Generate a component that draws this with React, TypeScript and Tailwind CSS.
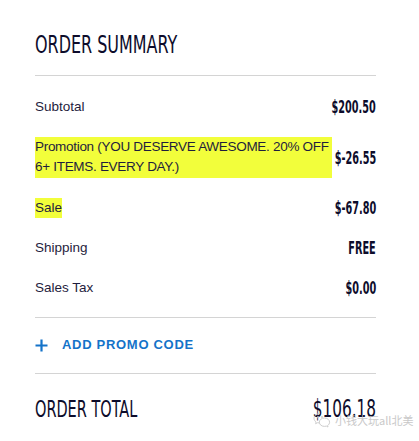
import React from 'react';

const condensed = "font-['DejaVu_Sans_Condensed','Liberation_Sans',sans-serif]";

interface Line {
  label: React.ReactNode;
  amount: string;
  highlight?: boolean;
  tight?: boolean;
}

const lines: Line[] = [
  { label: 'Subtotal', amount: '$200.50' },
  {
    label: (
      <>
        Promotion (YOU DESERVE AWESOME. 20% OFF
        <br />
        6+ ITEMS. EVERY DAY.)
      </>
    ),
    amount: '$-26.55',
    highlight: true,
    tight: true,
  },
  { label: 'Sale', amount: '$-67.80', highlight: true },
  { label: 'Shipping', amount: 'FREE' },
  { label: 'Sales Tax', amount: '$0.00' },
];

const WeChatMark: React.FC = () => (
  <svg width="18" height="16" viewBox="0 0 18 16" fill="none" stroke="#c9c9c9" strokeWidth="1">
    <path d="M7 1.5c-3.3 0-6 2.1-6 4.8 0 1.5.8 2.8 2.1 3.7l-.5 1.7 2-1c.7.2 1.5.3 2.3.3" />
    <path d="M11.5 6c-2.9 0-5.2 1.9-5.2 4.2s2.3 4.2 5.2 4.2c.6 0 1.2-.1 1.8-.3l1.7.9-.4-1.5c1.2-.8 2-1.9 2-3.3C16.6 7.9 14.3 6 11.5 6z" />
    <circle cx="5" cy="5" r=".6" fill="#c9c9c9" />
    <circle cx="9" cy="5" r=".6" fill="#c9c9c9" />
  </svg>
);

const App: React.FC = () => {
  return (
    <div className="relative w-[419px] h-[441px] overflow-hidden bg-white text-[#1f1d3d] font-['Liberation_Sans',sans-serif]">
      <div className="pl-[35px] pr-[43px] pt-[31px]">
        <div className="pb-[15px] border-b border-[#d4d4d4]">
          <h2 className={`${condensed} inline-block origin-left scale-x-[0.71] text-[25px] leading-[28px] text-[#0d0c2b] whitespace-nowrap`}>
            ORDER SUMMARY
          </h2>
        </div>

        <div className="flex flex-col gap-[20px] pt-[21px] pb-[19px] border-b border-[#d4d4d4]">
          {lines.map((line, i) => (
            <div key={i} className="flex items-center justify-between">
              <div
                className={`text-[13.5px] leading-[20px] whitespace-nowrap ${line.tight ? 'tracking-[-0.3px] pb-px pr-[3px]' : ''} ${
                  line.highlight ? 'bg-[#f2fe3b]' : ''
                }`}
              >
                {line.label}
              </div>
              <div className="flex w-[44px] shrink-0 justify-end">
                <span className={`${condensed} inline-block shrink-0 origin-right scale-x-[0.6] text-[18px] leading-[20px] font-bold text-[#0d0c2b] whitespace-nowrap`}>
                  {line.amount}
                </span>
              </div>
            </div>
          ))}
        </div>

        <div className="flex items-center gap-[14px] pt-[19px] pb-[20px] border-b border-[#d4d4d4] text-[#1473c9]">
          <svg width="13" height="13" viewBox="0 0 13 13" className="shrink-0">
            <path d="M6.5 0.5v12M0.5 6.5h12" stroke="#1473c9" strokeWidth="2.2" />
          </svg>
          <span className="text-[13px] leading-[16px] font-semibold tracking-[0.7px]">ADD PROMO CODE</span>
        </div>

        <div className="flex items-center justify-between pt-[21px]">
          <span className={`${condensed} inline-block origin-left scale-x-[0.7] text-[23px] leading-[28px] text-[#0d0c2b] whitespace-nowrap`}>
            ORDER TOTAL
          </span>
          <span className={`${condensed} inline-block origin-right scale-x-[0.68] text-[25px] leading-[28px] text-[#0d0c2b] whitespace-nowrap`}>
            $106.18
          </span>
        </div>
      </div>

      <div className="absolute left-[313px] top-[412px] flex items-center gap-[4px] opacity-90">
        <WeChatMark />
        <span className="text-[11px] leading-[14px] text-[#c4c4c4] font-['Noto_Sans_CJK_SC',sans-serif]">小钱大玩all北美</span>
      </div>
    </div>
  );
};

export default App;
